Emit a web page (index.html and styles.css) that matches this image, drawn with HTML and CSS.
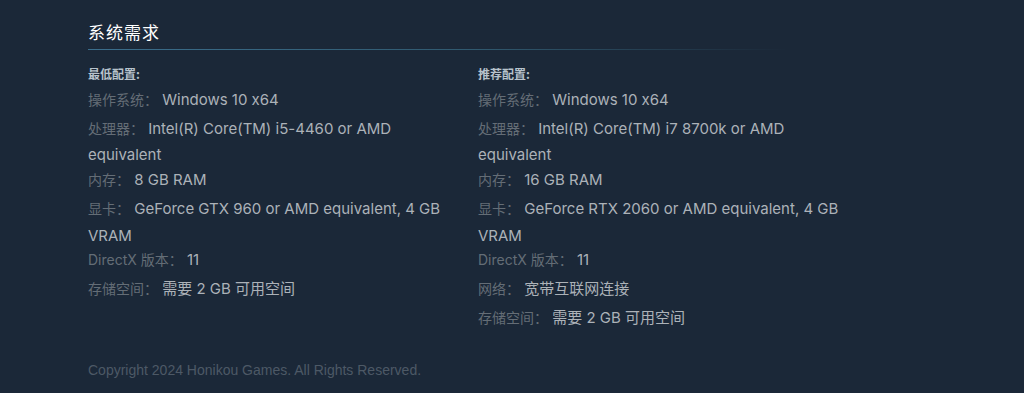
FILE: index.html
```html
<!DOCTYPE html>
<html lang="zh-CN">
<head>
<meta charset="utf-8">
<title>系统需求</title>
<link rel="stylesheet" href="styles.css">
</head>
<body>
<div class="page">
  <h2 class="section-title">系统需求</h2>
  <div class="sysreq">
    <div class="col">
      <div class="col-title">最低配置:</div>
      <ul class="req-list">
        <li><span class="lbl">操作系统：</span> Windows 10 x64</li>
        <li><span class="lbl">处理器：</span> Intel(R) Core(TM) i5-4460 or AMD equivalent</li>
        <li><span class="lbl">内存：</span> 8 GB RAM</li>
        <li><span class="lbl">显卡：</span> GeForce GTX 960 or AMD equivalent, 4 GB VRAM</li>
        <li><span class="lbl">DirectX 版本：</span> 11</li>
        <li><span class="lbl">存储空间：</span> 需要 2 GB 可用空间</li>
      </ul>
    </div>
    <div class="col">
      <div class="col-title">推荐配置:</div>
      <ul class="req-list">
        <li><span class="lbl">操作系统：</span> Windows 10 x64</li>
        <li><span class="lbl">处理器：</span> Intel(R) Core(TM) i7 8700k or AMD equivalent</li>
        <li><span class="lbl">内存：</span> 16 GB RAM</li>
        <li><span class="lbl">显卡：</span> GeForce RTX 2060 or AMD equivalent, 4 GB VRAM</li>
        <li><span class="lbl">DirectX 版本：</span> 11</li>
        <li><span class="lbl">网络：</span> 宽带互联网连接</li>
        <li><span class="lbl">存储空间：</span> 需要 2 GB 可用空间</li>
      </ul>
    </div>
  </div>
  <p class="legal">Copyright 2024 Honikou Games. All Rights Reserved.</p>
</div>
</body>
</html>
```

FILE: styles.css
```css
html, body {
  margin: 0;
  padding: 0;
  background: #1b2838;
}

body {
  font-family: "Inter", "Noto Sans CJK SC", sans-serif;
  font-feature-settings: "calt" 0;
  color: #acb2b8;
  height: 393px;
  overflow: hidden;
}

.page {
  padding: 20px 0 0 88px;
}

.section-title {
  margin: 0;
  width: 700px;
  padding: 0 0 6px 0;
  font-family: "Noto Sans CJK SC", sans-serif;
  font-size: 17px;
  font-weight: normal;
  line-height: 24px;
  letter-spacing: 1px;
  color: #ffffff;
  background: linear-gradient(to right, #3b6e8c 0%, #30596f 55%, rgba(27, 40, 56, 0) 100%) no-repeat left bottom / 100% 1px;
}

.sysreq {
  display: grid;
  grid-template-columns: 370px 370px;
  column-gap: 20px;
  margin-top: 16px;
}

.col-title {
  font-family: "Noto Sans CJK SC", sans-serif;
  font-size: 12px;
  font-weight: bold;
  line-height: 16px;
  color: #b8c3cc;
  margin-bottom: 5px;
}

.req-list {
  list-style: none;
  margin: 0;
  padding: 0;
  font-size: 15px;
  line-height: 22.7px;
}

.req-list li {
  margin: 0;
}

.lbl {
  display: inline-block;
  padding: 2px 0 4px 0;
  font-size: 14px;
  color: #646d76;
}

.legal {
  margin: 29px 0 0 0;
  font-family: "Liberation Sans", Arial, sans-serif;
  font-size: 14px;
  color: #4d5966;
}
```
